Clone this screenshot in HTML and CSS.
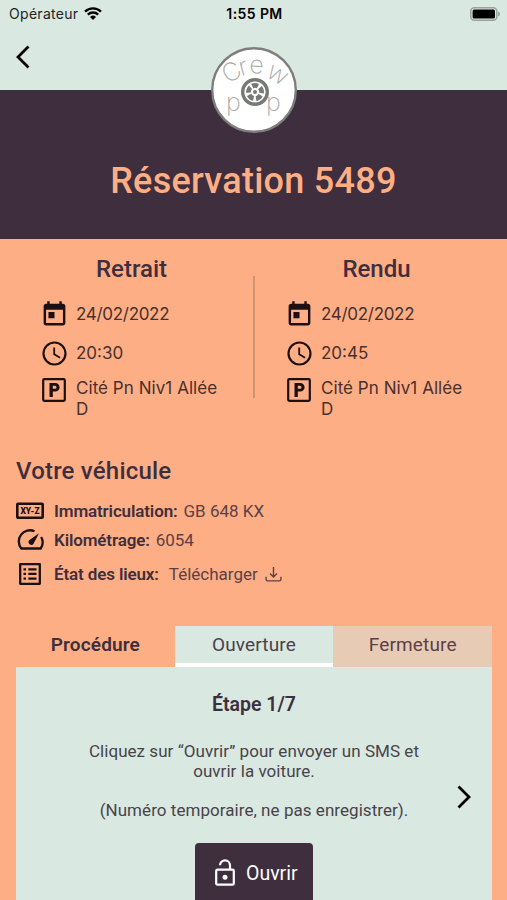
FILE: index.html
```html
<!DOCTYPE html>
<html lang="fr">
<head>
    <meta charset="UTF-8">
    <meta name="viewport" content="width=device-width, initial-scale=1.0">
    <title>Réservation 5489</title>
    <link rel="stylesheet" href="styles.css">
</head>
<body>
    <!-- Shared icons -->
    <svg width="0" height="0" class="sprite">
        <symbol id="calendar" viewBox="0 0 24 24">
            <path d="M19 3h-1V1h-2v2H8V1H6v2H5c-1.1 0-2 .9-2 2v14c0 1.1.9 2 2 2h14c1.1 0 2-.9 2-2V5c0-1.1-.9-2-2-2zm0 16H5V8h14v11zM7 10h5v5H7z"/>
        </symbol>
        <symbol id="clock" viewBox="0 0 24 24">
            <path d="M12 2C6.5 2 2 6.5 2 12s4.500 10 10 10 10-4.500 10-10S17.500 2 12 2zm0 18.200a8.200 8.200 0 1 1 0-16.400 8.200 8.200 0 0 1 0 16.400zM12.500 7H11v6l5.200 3.100.8-1.200-4.500-2.700z"/>
        </symbol>
        <symbol id="parking" viewBox="0 0 24 24">
            <rect x="1.200" y="1.200" width="21.600" height="21.600" rx="1" fill="none" stroke="currentColor" stroke-width="2.200"/>
            <path fill-rule="evenodd" d="M7.500 5h5.800a4.300 4.300 0 0 1 0 8.600h-2.500V19H7.500zm3.300 2.800v3h2.200a1.500 1.500 0 0 0 0-3z"/>
        </symbol>
        <symbol id="chevron" viewBox="0 0 14 24">
            <path d="M12.500 1.500 2 12l10.500 10.500" fill="none" stroke="currentColor" stroke-width="2.800"/>
        </symbol>
    </svg>

    <header class="topbar">
        <div class="status">
            <div class="carrier">
                <span>Opérateur</span>
                <svg class="wifi" viewBox="0 0 18 13">
                    <path d="M1 4.600a11.500 11.500 0 0 1 16 0M3.800 7.600a7.500 7.500 0 0 1 10.400 0" fill="none" stroke="#000" stroke-width="2.300"/>
                    <path d="M9 13 6 10a4.300 4.300 0 0 1 6 0z"/>
                </svg>
            </div>
            <div class="time">1:55 PM</div>
            <svg class="battery" viewBox="0 0 30 14">
                <rect x=".8" y=".8" width="26" height="12.400" rx="3.500" fill="none" stroke="#98a39e" stroke-width="1.500"/>
                <rect x="2.600" y="2.600" width="22.400" height="8.800" rx="1.500"/>
                <path d="M28 4.600q2 .6 2 2.400t-2 2.400z" fill="#98a39e"/>
            </svg>
        </div>
        <a href="#" class="back"><svg viewBox="0 0 14 24"><use href="#chevron"/></svg></a>
        <svg class="logo" viewBox="0 0 86 86">
            <circle cx="43" cy="43" r="41.800" fill="#fff" stroke="#7d7e7d" stroke-width="2.400"/>
            <g class="logo-text">
                <text transform="translate(17 37) rotate(-30)">C</text>
                <text transform="translate(30 29) rotate(-15)">r</text>
                <text transform="translate(38 26) rotate(3)">e</text>
                <text transform="translate(54 29) rotate(30)">w</text>
                <text transform="translate(15 64)">p</text>
                <text transform="translate(55 64)">p</text>
            </g>
            <circle cx="44" cy="45" r="12.300" fill="#fff" stroke="#777977" stroke-width="3.400"/>
            <circle cx="44" cy="45" r="6.600" fill="none" stroke="#777977" stroke-width="4.800" stroke-dasharray="5.900 2.394" transform="rotate(-115 44 45)"/>
            <circle cx="44" cy="45" r="2" fill="#777977"/>
        </svg>
    </header>

    <div class="hero">
        <h1>Réservation 5489</h1>
    </div>

    <div class="trip">
        <div class="trip-col">
            <h2>Retrait</h2>
            <div class="trip-row date"><svg><use href="#calendar"/></svg><span>24/02/2022</span></div>
            <div class="trip-row hour"><svg><use href="#clock"/></svg><span>20:30</span></div>
            <div class="trip-row place"><svg><use href="#parking"/></svg><span>Cité Pn Niv1 Allée D</span></div>
        </div>
        <div class="divider"></div>
        <div class="trip-col">
            <h2>Rendu</h2>
            <div class="trip-row date"><svg><use href="#calendar"/></svg><span>24/02/2022</span></div>
            <div class="trip-row hour"><svg><use href="#clock"/></svg><span>20:45</span></div>
            <div class="trip-row place"><svg><use href="#parking"/></svg><span>Cité Pn Niv1 Allée D</span></div>
        </div>
    </div>

    <div class="vehicle">
        <h2>Votre véhicule</h2>
        <div class="vehicle-row plate">
            <svg viewBox="0 0 28 28">
                <rect x="1.300" y="6.800" width="25.400" height="13.900" rx=".8" fill="none" stroke="currentColor" stroke-width="2.600"/>
                <text x="14" y="17" text-anchor="middle" class="plate-text">XY-Z</text>
            </svg>
            <b>Immatriculation:</b><span>GB 648 KX</span>
        </div>
        <div class="vehicle-row mileage">
            <svg viewBox="0 0 28 28">
                <path d="M18.500 5.200A11.200 11.200 0 0 0 5.300 22.500h19.400A11.200 11.200 0 0 0 25.200 11" fill="none" stroke="currentColor" stroke-width="2.300" stroke-linejoin="round"/>
                <path d="m23 7.200-5.500 10.500a2.700 2.700 0 1 1-4.300-3.400z"/>
            </svg>
            <b>Kilométrage:</b><span>6054</span>
        </div>
        <div class="vehicle-row report">
            <svg viewBox="0 0 28 28">
                <path d="M4.200 4.200h19.600v19.600H4.200z" fill="none" stroke="currentColor" stroke-width="2.300" stroke-linejoin="round"/>
                <path d="M7.500 8.200h2.500v2.300H7.500zm0 4.600h2.500v2.300H7.500zm0 4.600h2.500v2.300H7.500zM12.300 8.200h8.200v2.300h-8.200zm0 4.600h8.200v2.300h-8.200zm0 4.600h8.200v2.300h-8.200z"/>
            </svg>
            <b>État des lieux:</b>
            <a href="#">Télécharger
                <svg class="download" viewBox="0 0 16 16"><path d="M8 1v9M4.700 7 8 10.300 11.300 7M1 10v2.500Q1 14 2.500 14h11q1.500 0 1.500-1.500V10" fill="none" stroke="currentColor" stroke-width="1.300"/></svg>
            </a>
        </div>
    </div>

    <div class="procedure">
        <div class="tabs">
            <div class="tab-title">Procédure</div>
            <div class="tab active">Ouverture</div>
            <div class="tab">Fermeture</div>
        </div>
        <div class="panel">
            <div class="step">
                <h3>Étape 1/7</h3>
                <p>Cliquez sur “Ouvrir” pour envoyer un SMS et<br>ouvrir la voiture.</p>
                <p>(Numéro temporaire, ne pas enregistrer).</p>
                <button class="open-button">
                    <svg viewBox="0 0 22 28">
                        <rect x="2.200" y="10.700" width="17.600" height="15" rx="1.300" fill="none" stroke="#fff" stroke-width="2.200"/>
                        <path d="M6 6.300a5 5 0 0 1 10 .2v4" fill="none" stroke="#fff" stroke-width="2.200"/>
                        <circle cx="11" cy="18.200" r="2.500" fill="#fff"/>
                    </svg>
                    <span>Ouvrir</span>
                </button>
            </div>
            <a href="#" class="next"><svg viewBox="0 0 14 24"><use href="#chevron"/></svg></a>
        </div>
    </div>
</body>
</html>
```
FILE: styles.css
```css
* {
    box-sizing: border-box;
}

body {
    margin: 0;
    height: 900px;
    overflow: hidden;
    background-color: #feae84;
    color: #3e2e3e;
    font-family: Roboto, sans-serif;
}

h1, h2, h3, p {
    margin: 0;
    font-weight: 500;
}

a {
    color: inherit;
    text-decoration: none;
}

.sprite {
    position: absolute;
}

/* Header */
.topbar {
    position: relative;
    height: 90px;
    background-color: #dae8e2;
    color: #000;
}

.status {
    display: grid;
    grid-template-columns: 1fr auto 1fr;
    align-items: center;
    height: 27px;
    padding: 0 7px 0 9px;
    font-family: Inter, sans-serif;
    font-size: 14px;
}

.carrier {
    display: flex;
    align-items: center;
    gap: 6px;
    color: #1d2422;
    letter-spacing: 0.3px;
}

.wifi {
    width: 18px;
    height: 13px;
}

.time {
    font-weight: 600;
    font-size: 14px;
    letter-spacing: 0.4px;
}

.battery {
    width: 30px;
    height: 14px;
    justify-self: end;
}

.back {
    display: block;
    width: 14px;
    margin: 18px 0 0 16px;
}

.back svg, .next svg {
    display: block;
    width: 14px;
    height: 24px;
}

.logo {
    position: absolute;
    left: 211px;
    top: 47px;
    width: 86px;
    height: 86px;
}

.logo-text {
    font-family: Inter, sans-serif;
    font-weight: 200;
    font-size: 25px;
    fill: #aaa;
}

.hero {
    height: 149px;
    padding-top: 70px;
    background-color: #3e2e3e;
    text-align: center;
}

h1 {
    color: #feae84;
    font-size: 36px;
    line-height: 42px;
    letter-spacing: 0.28px;
}

h2 {
    font-size: 24px;
    line-height: 28px;
}

/* Pick-up and return */
.trip {
    display: flex;
    height: 218px;
    padding: 16px 8px 0 10px;
}

.trip-col {
    width: 243px;
}

.trip-col h2 {
    text-align: center;
}

.divider {
    width: 2px;
    height: 122px;
    margin-top: 21px;
    background-color: #d29372;
}

.trip-row {
    display: flex;
    gap: 9px;
    padding-left: 32px;
    font-family: Inter, sans-serif;
    font-size: 17px;
    line-height: 21px;
    color: #48302f;
}

.trip-row svg {
    flex: none;
    width: 25px;
    height: 25px;
    color: #1c1013;
    fill: #1c1013;
}

.trip-row span {
    width: 150px;
}

.date {
    align-items: center;
    margin-top: 17px;
    letter-spacing: -0.3px;
}

.date svg {
    width: 29px;
    height: 29px;
    margin: 0 -2px;
}

.hour {
    align-items: center;
    margin-top: 10px;
}

.hour svg {
    width: 29px;
    height: 29px;
    margin: 0 -2px;
}

.place {
    margin-top: 10px;
    letter-spacing: 0.05px;
}

.place svg {
    width: 24px;
    height: 24px;
    margin-right: 1px;
}

/* Vehicle */
.vehicle {
    height: 169px;
    padding-left: 16px;
}

.vehicle h2 {
    letter-spacing: 0.2px;
}

.vehicle-row {
    display: flex;
    align-items: center;
    height: 28px;
    font-size: 17px;
    color: #5b4048;
}

.vehicle-row b {
    margin: 0 6px 0 10px;
    color: #3e2e3e;
    font-weight: 600;
    letter-spacing: -0.13px;
}

.vehicle-row > svg {
    width: 28px;
    height: 28px;
    color: #1c1013;
    fill: #1c1013;
}

.plate {
    margin-top: 12px;
}

.mileage {
    margin-top: 1px;
}

.report {
    margin-top: 6px;
}

.report a {
    display: flex;
    align-items: center;
    gap: 7px;
    margin-left: 4px;
}

.download {
    width: 17px;
    height: 17px;
}

.plate-text {
    font-family: Roboto, sans-serif;
    font-weight: 900;
    font-size: 8.5px;
}

/* Procedure */
.procedure {
    padding: 0 15px 0 16px;
}

.tabs {
    display: flex;
    height: 41px;
    font-size: 19px;
    letter-spacing: 0.15px;
    line-height: 38px;
    text-align: center;
}

.tabs > div {
    flex: 1;
}

.tab-title {
    font-weight: 600;
}

.tab {
    background-color: #e8cbb4;
    color: #5b4048;
}

.tab.active {
    background-color: #dae8e2;
    border-bottom: 4px solid #fff;
    color: #4b4249;
}

.panel {
    position: relative;
    height: 240px;
    padding-top: 26px;
    background-color: #dae8e2;
    text-align: center;
}

.panel h3 {
    margin-bottom: 24px;
    font-size: 19.5px;
    line-height: 24px;
    font-weight: 600;
}

.panel p {
    margin-bottom: 19px;
    color: #484348;
    font-size: 17px;
    letter-spacing: 0.05px;
    font-weight: 400;
    line-height: 20px;
}

.open-button {
    display: flex;
    align-items: center;
    gap: 10px;
    width: 118px;
    height: 60px;
    margin: 23px auto 0;
    padding: 0 0 0 19px;
    border: none;
    border-radius: 4px;
    background-color: #3e2e3e;
    color: #fff;
    font-family: inherit;
    font-size: 19.5px;
}

.open-button svg {
    width: 22px;
    height: 28px;
}

.next {
    position: absolute;
    right: 21px;
    top: 118px;
    color: #000;
    transform: scaleX(-1);
}
```
